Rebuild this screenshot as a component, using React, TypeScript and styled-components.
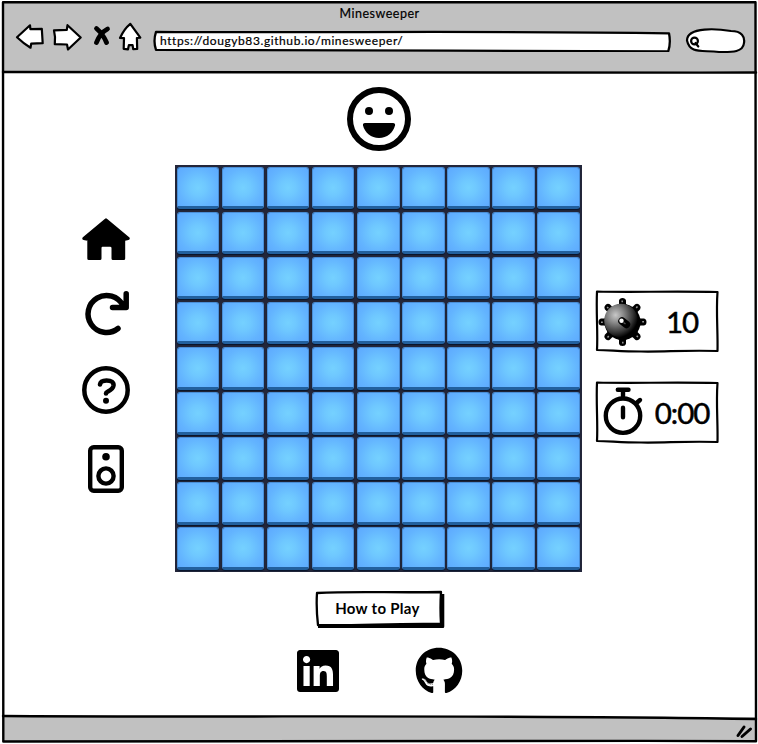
import React from "react";
import styled, { createGlobalStyle } from "styled-components";
import { FaGithub, FaLinkedin } from "react-icons/fa";

const GlobalStyle = createGlobalStyle`
  *, *::before, *::after { box-sizing: border-box; }
  body { margin: 0; background: #fff; overflow: hidden; }
  button { font: inherit; color: inherit; border: 0; padding: 0; background: none; }
`;

const Window = styled.div`
  position: relative;
  width: 758px;
  height: 744px;
  display: flex;
  flex-direction: column;
  padding: 2px 2px 2px 3px;
  color: #000;
  background: #fff;
  font-family: Lato, "Noto Sans", sans-serif;
`;

const Outline = styled.svg`
  position: absolute;
  inset: 0;
  width: 100%;
  height: 100%;
  fill: none;
  stroke: #000;
  stroke-width: 2.4;
  stroke-linejoin: round;
  stroke-linecap: round;
  pointer-events: none;
`;

const Header = styled.header`
  height: 71px;
  flex: none;
  display: flex;
  flex-direction: column;
  background: #c1c1c1;
`;

const Title = styled.div`
  height: 20px;
  padding: 3px 0 0;
  text-align: center;
  font-size: 12.5px;
  line-height: 18px;
  -webkit-text-stroke: 0.2px #000;
  letter-spacing: 0.5px;
`;

const Toolbar = styled.nav`
  display: flex;
  align-items: flex-start;
  padding-left: 12px;
`;

const NavIcons = styled.svg`
  width: 130px;
  height: 34px;
  fill: #fff;
  stroke: #000;
  stroke-width: 2.2;
  stroke-linejoin: round;
  stroke-linecap: round;
`;

const Address = styled.div`
  position: relative;
  width: 518px;
  height: 22px;
  margin: 8px 0 0 8px;
  padding-left: 7px;
  font-size: 12px;
  line-height: 21px;
  letter-spacing: 0.59px;
  -webkit-text-stroke: 0.2px #000;
`;

const FieldShape = styled.svg`
  position: absolute;
  inset: 0;
  width: 100%;
  height: 100%;
  fill: #fff;
  stroke: #000;
  stroke-width: 2.3;
  stroke-linejoin: round;
`;

const FieldText = styled.span`
  position: relative;
`;

const Search = styled.svg`
  width: 62px;
  height: 28px;
  margin: 6px 0 0 14px;
  fill: #fff;
  stroke: #000;
  stroke-width: 2.2;
  stroke-linecap: round;
`;

const Page = styled.main`
  flex: 1;
  display: flex;
  flex-direction: column;
  align-items: center;
  padding-top: 14px;
`;

const Footer = styled.footer`
  height: 25px;
  flex: none;
  background: #c1c1c1;
`;

const Face = styled.svg`
  width: 64px;
  height: 64px;
  flex: none;
  margin-right: 1px;
`;

const Game = styled.section`
  width: 753px;
  display: grid;
  grid-template-columns: 172px 407px 1fr;
  margin-top: 14px;
`;

const Menu = styled.div`
  display: flex;
  flex-direction: column;
  align-items: center;
  gap: 28px;
  padding: 50px 0 0 34px;
`;

const MenuIcon = styled.svg`
  display: block;
  width: 50px;
  height: 50px;
  fill: none;
  stroke: #000;
  stroke-width: 5;
  stroke-linecap: round;
  stroke-linejoin: round;
`;

const MenuButton = styled.button<{ $shift?: number }>`
  height: 49px;
  margin-top: ${(p) => p.$shift ?? 0}px;
`;

const Board = styled.div`
  width: 407px;
  height: 407px;
  padding: 1px 0 0 1px;
  display: grid;
  grid-template: repeat(9, 1fr) / repeat(9, 1fr);
  background: #23263a;
`;

const Tile = styled.div`
  margin: 0.5px 2px 2px 0.5px;
  border-radius: 3px;
  border: 1px solid #4a8ed6;
  border-bottom: 3px solid #22609e;
  box-shadow: 0 1px 1px #07142c;
  background: radial-gradient(circle at 50% 52%, #75d1ff 0%, #6fc8ff 28%, #63b4ff 68%, #5da9ff 100%);
  background-clip: padding-box;
  background-color: #4a8ed6;
`;

const Status = styled.aside`
  display: flex;
  flex-direction: column;
  gap: 28px;
  padding: 125px 0 0 13px;
`;

const Counter = styled.div`
  position: relative;
  width: 124px;
  height: 63px;
  display: flex;
  align-items: center;
`;

const CounterOutline = styled(FieldShape)`
  fill: none;
  stroke-width: 2.2;
`;

const CounterIcon = styled.svg`
  width: 52px;
  height: 63px;
  flex: none;
`;

const CounterValue = styled.span<{ $spacing: string }>`
  flex: 1;
  padding: 1px 2px 0 0;
  text-align: center;
  font-size: 29.5px;
  line-height: 36px;
  -webkit-text-stroke: 0.5px #000;
  letter-spacing: ${(p) => p.$spacing};
`;

const HowTo = styled.button`
  position: relative;
  width: 130px;
  height: 38px;
  margin: 18px 0 0 0;
  padding: 0 4px 2px 0;
  font-size: 15px;
  font-weight: 700;
  letter-spacing: 0.3px;
`;

const Social = styled.div`
  display: flex;
  align-items: center;
  gap: 73px;
  margin: 19px 2px 0 0;
  font-size: 48px;
  svg { display: block; }
`;

function Mine() {
  return (
    <CounterIcon viewBox="0 0 52 63">
      <defs>
        <radialGradient id="metal" cx="34%" cy="34%" r="68%">
          <stop offset="0" stopColor="#c8c8c8" />
          <stop offset="0.35" stopColor="#888" />
          <stop offset="0.75" stopColor="#383838" />
          <stop offset="1" stopColor="#000" />
        </radialGradient>
      </defs>
      {[0, 45, 90, 135, 180, 225, 270, 315].map((a) => (
        <g key={a} transform={`rotate(${a} 27.5 32)`}>
          <path d="M21.5 18 L24 14 V10.5 Q24.5 8 27.5 8 Q30.5 8 31 10.5 V14 L33.5 18Z" fill="#000" />
          <path d="M27.2 10.5V12.3" stroke="#999" strokeWidth="1.5" />
        </g>
      ))}
      <circle cx="27.5" cy="32" r="18" fill="#000" />
      <circle cx="26" cy="30.5" r="16.8" fill="url(#metal)" />
      <path d="M27 31 L31.5 34.5" stroke="#000" strokeWidth="7.5" strokeLinecap="round" />
      <circle cx="26.5" cy="30.8" r="2.2" fill="#fff" />
      <path d="M28.5 32.5l2 1.5" stroke="#555" strokeWidth="1.3" />
    </CounterIcon>
  );
}

function Stopwatch() {
  return (
    <CounterIcon viewBox="0 0 52 63" fill="none" stroke="#000" strokeWidth="4.4" strokeLinecap="round">
      <circle cx="28" cy="34.7" r="17.2" />
      <path d="M22.8 8.7H33.5M28 9.5V16M41.5 22L45 19M28 26.7V36.2" />
    </CounterIcon>
  );
}

function CounterBorder() {
  return (
    <CounterOutline viewBox="0 0 124 63">
      <path d="M2 1.5 C35 2.5 75 1 122.5 2 C121 22 123 42 122.5 61 C88 60 70 62 46 61.5 C26 61.5 14 60 2 60 C3 43 1 22 2 1.5Z" />
    </CounterOutline>
  );
}

export default function App() {
  return (
    <>
      <GlobalStyle />
      <Window>
        <Header>
          <Title>Minesweeper</Title>
          <Toolbar>
            <NavIcons viewBox="15 22 130 34">
              <path d="M17 37.2L30 25.3L30.4 29.2L41.8 28.8L42.7 43.2L31.2 43.7L30.5 47.7Q23 43 17 37.2Z" />
              <path d="M54 30.4L66.8 29.8L67.5 25.2L80.7 37.5L68 49.5L67 44.5L54.8 44.2Q55.7 37 54 30.4Z" />
              <path d="M96.5 28.5Q103 34 106.5 42.5M107.5 29Q100 33 96.5 42.5" strokeWidth="4.8" />
              <path d="M130.3 23.8L140.3 37.7L136.9 38L137.2 49L133.2 49.1L132.6 45.1H128.9L128 49.3L123.7 48.8L124 38.2L120 38Q124 29 130.3 23.8Z" />
            </NavIcons>
            <Address>
              <FieldShape viewBox="153 30 518 22">
                <path d="M156 31.8C320 33 490 30.5 669 33.3Q671 43 668.2 51.5C500 51.5 320 49 156 49.8Q153 41 156 31.8Z" />
              </FieldShape>
              <FieldText>https://dougyb83.github.io/minesweeper/</FieldText>
            </Address>
            <Search viewBox="685 28 62 28">
              <path d="M687 40.5C687 26 719 29 731 31C742 31 745 37 744 43C743 53 730 52 719 52C701 50 690 54 687 40.5Z" />
              <circle cx="694.5" cy="41" r="3.4" />
              <path d="M695.5 43L698.3 46.5" />
            </Search>
          </Toolbar>
        </Header>
        <Page>
          <Face viewBox="0 0 64 64">
            <circle cx="32" cy="32" r="29" fill="none" stroke="#000" strokeWidth="6" />
            <circle cx="22" cy="24" r="4" />
            <circle cx="42" cy="24" r="4" />
            <path d="M18 36H46Q48.5 36 48 38.5C46 46 40 51 32 51S18 46 16 38.5Q15.5 36 18 36Z" />
          </Face>
          <Game>
            <Menu>
              <MenuButton aria-label="Home">
                <MenuIcon viewBox="0 0 50 50">
                  <path d="M25 4.8L47.2 23.5L42.7 24.5V43.5H32V33Q32 30.3 29 30.3H21.5Q19 30.3 19 33V43.5H7.8V24.5L2.8 23.5Z" fill="#000" strokeWidth="3" />
                </MenuIcon>
              </MenuButton>
              <MenuButton aria-label="Restart" $shift={-4}>
                <MenuIcon viewBox="0 0 50 50">
                  <path d="M37 40.5A18.5 18.5 0 1 1 42 17.5M31.5 19.5H45.2V5.8" strokeWidth="5.5" />
                </MenuIcon>
              </MenuButton>
              <MenuButton aria-label="Help">
                <MenuIcon viewBox="0 0 50 50">
                  <circle cx="25" cy="25" r="21.7" strokeWidth="4.5" />
                  <path d="M19 19.5Q19.5 15.5 25.5 15.5Q33 15.5 32.5 20.5Q32 24 27 26.5Q25 27.5 25 28.5" strokeWidth="4.6" />
                  <circle cx="25" cy="35.7" r="3" fill="#000" stroke="none" />
                </MenuIcon>
              </MenuButton>
              <MenuButton aria-label="Sound" $shift={2}>
                <MenuIcon viewBox="0 0 50 50">
                  <rect x="9.2" y="3.2" width="31.6" height="43.6" rx="3.5" strokeWidth="4.4" />
                  <circle cx="25" cy="12.7" r="3.8" fill="#000" stroke="none" />
                  <circle cx="25" cy="32" r="7.6" strokeWidth="4.4" />
                </MenuIcon>
              </MenuButton>
            </Menu>
            <Board>
              {Array.from({ length: 81 }, (_, i) => (
                <Tile key={i} />
              ))}
            </Board>
            <Status>
              <Counter>
                <CounterBorder />
                <Mine />
                <CounterValue $spacing="-1px">10</CounterValue>
              </Counter>
              <Counter>
                <CounterBorder />
                <Stopwatch />
                <CounterValue $spacing="-1px">0:00</CounterValue>
              </Counter>
            </Status>
          </Game>
          <HowTo>
            <FieldShape viewBox="0 0 130 38">
              <path d="M3 36.3H127.3V4" strokeWidth="4" />
              <path d="M2 3C40 1 80 3 126 2Q125 18 126 34C80 33 40 36 3 35Q1 18 2 3Z" />
            </FieldShape>
            <FieldText>How to Play</FieldText>
          </HowTo>
          <Social>
            <FaLinkedin />
            <FaGithub />
          </Social>
        </Page>
        <Footer />
        <Outline viewBox="0 0 758 744">
          <path d="M3 2.2C220 3 480 1.5 755.5 2.3Q757 370 756 741.3C500 740 240 742 3.3 741.5Q1.5 360 3 2.2Z" />
          <path d="M3 72C220 72.5 490 73 756 72.5" />
          <path d="M3 716C240 717.5 520 714.5 756 719" />
          <path d="M738 735.5L744 727M742 736.5L750.5 729" strokeWidth="3" />
        </Outline>
      </Window>
    </>
  );
}
